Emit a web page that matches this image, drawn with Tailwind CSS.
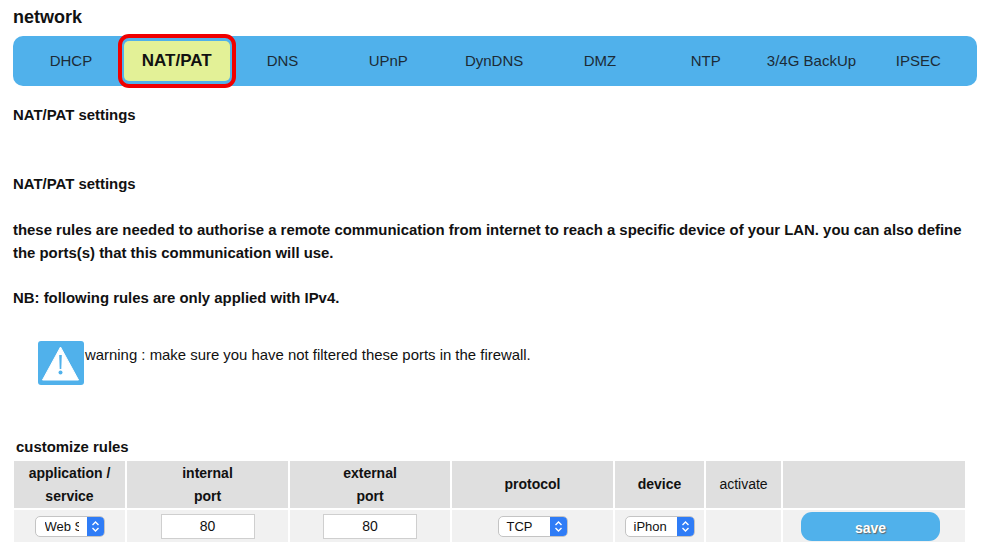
<!DOCTYPE html>
<html lang="en">
<head>
  <meta charset="UTF-8" />
  <title>network</title>
  <script src="https://cdn.jsdelivr.net/npm/@tailwindcss/browser@4"></script>
</head>
<body class="bg-white text-[#111] font-['Liberation_Sans',Arial,sans-serif] text-[14.92px] overflow-hidden">
  <div class="w-[990px] h-[557px] pl-[13px] pt-[7px] overflow-hidden">
    <h1 class="font-bold text-[18px] leading-[20px]">network</h1>

    <nav class="mt-[9px] w-[964px] h-[50px] bg-[#50b1eb] rounded-[10px] pl-[5px] flex items-center text-[15px] text-[#1c2b36]">
      <a class="w-[105.8px] text-center">DHCP</a>
      <div class="relative w-[105.8px] h-[40px] bg-[#e3f197] rounded-[5px] flex items-center justify-center font-bold text-[17px] text-[#111]">
        NAT/PAT
        <span class="absolute -inset-x-[6px] -inset-y-[7px] border-4 border-[#f00000] rounded-[11px]"></span>
      </div>
      <a class="w-[105.8px] text-center">DNS</a>
      <a class="w-[105.8px] text-center">UPnP</a>
      <a class="w-[105.8px] text-center">DynDNS</a>
      <a class="w-[105.8px] text-center">DMZ</a>
      <a class="w-[105.8px] text-center">NTP</a>
      <a class="w-[105.8px] text-center">3/4G BackUp</a>
      <a class="w-[105.8px] text-center pl-[2px]">IPSEC</a>
    </nav>

    <p class="mt-[20px] font-bold leading-[18px]">NAT/PAT settings</p>
    <p class="mt-[51px] font-bold leading-[18px]">NAT/PAT settings</p>
    <p class="mt-[25px] font-bold leading-[23px] w-[960px]">these rules are needed to authorise a remote communication from internet to reach a specific device of your LAN. you can also define the ports(s) that this communication will use.</p>
    <p class="mt-[25px] font-bold leading-[18px]">NB: following rules are only applied with IPv4.</p>

    <div class="mt-[34px] ml-[25px] flex items-start">
      <svg class="w-[46px] h-[44px] shrink-0" viewBox="0 0 46 44">
        <rect width="46" height="44" rx="3" fill="#50b1eb" />
        <path d="M22.5 6 L40.5 39 L4.5 39 Z" fill="#fff" stroke="#fff" stroke-linejoin="round" />
        <path d="M21.2 14 h2.6 l-.5 14 h-1.6 Z" fill="#50b1eb" />
        <circle cx="22.5" cy="31.5" r="2" fill="#50b1eb" />
      </svg>
      <p class="ml-[1px] leading-[18px] mt-[5px]">warning : make sure you have not filtered these ports in the firewall.</p>
    </div>

    <p class="mt-[54px] ml-[3px] font-bold leading-[16px]">customize rules</p>

    <table class="mt-[6px] ml-[1px] w-[951px] table-fixed border-collapse text-[14px]">
      <colgroup>
        <col class="w-[112px]" />
        <col class="w-[163px]" />
        <col class="w-[162px]" />
        <col class="w-[163px]" />
        <col class="w-[91px]" />
        <col class="w-[77px]" />
        <col />
      </colgroup>
      <thead>
        <tr class="h-[48px] bg-[#dfdfdf] font-bold leading-[23px]">
          <th class="border-r-2 border-white font-bold">application /<br />service</th>
          <th class="border-r-2 border-white font-bold">internal<br />port</th>
          <th class="border-r-2 border-white font-bold">external<br />port</th>
          <th class="border-r-2 border-white font-bold">protocol</th>
          <th class="border-r-2 border-white font-bold">device</th>
          <th class="border-r-2 border-white font-normal">activate</th>
          <th></th>
        </tr>
      </thead>
      <tbody>
        <tr class="h-[33px] bg-[#f1f1f1] border-t-2 border-white text-[13px]">
          <td class="border-r-2 border-white">
            <div class="mx-auto w-[70px] h-[21px] flex rounded-[5px] bg-white border border-[#c4c4c4] overflow-hidden">
              <span class="ml-[9px] mr-[8px] flex-1 leading-[19px] overflow-hidden whitespace-nowrap">Web S</span>
              <svg class="w-[17px] h-full shrink-0 bg-[#2f7cf6]" viewBox="0 0 17 19"><path d="M5.5 8 L8.5 5 L11.5 8 M5.5 11 L8.5 14 L11.5 11" fill="none" stroke="#fff" stroke-width="1.4" /></svg>
            </div>
          </td>
          <td class="border-r-2 border-white">
            <input value="80" class="block mx-auto w-[94px] h-[25px] bg-white border border-[#cfcfcf] text-center text-[14px]" />
          </td>
          <td class="border-r-2 border-white">
            <input value="80" class="block mx-auto w-[94px] h-[25px] bg-white border border-[#cfcfcf] text-center text-[14px]" />
          </td>
          <td class="border-r-2 border-white">
            <div class="mx-auto w-[70px] h-[21px] flex rounded-[5px] bg-white border border-[#c4c4c4] overflow-hidden">
              <span class="flex-1 pl-[8px] leading-[19px]">TCP</span>
              <svg class="w-[17px] h-full shrink-0 bg-[#2f7cf6]" viewBox="0 0 17 19"><path d="M5.5 8 L8.5 5 L11.5 8 M5.5 11 L8.5 14 L11.5 11" fill="none" stroke="#fff" stroke-width="1.4" /></svg>
            </div>
          </td>
          <td class="border-r-2 border-white">
            <div class="mx-auto w-[70px] h-[21px] flex rounded-[5px] bg-white border border-[#c4c4c4] overflow-hidden">
              <span class="flex-1 pl-[8px] leading-[19px] overflow-hidden whitespace-nowrap">iPhon</span>
              <svg class="w-[17px] h-full shrink-0 bg-[#2f7cf6]" viewBox="0 0 17 19"><path d="M5.5 8 L8.5 5 L11.5 8 M5.5 11 L8.5 14 L11.5 11" fill="none" stroke="#fff" stroke-width="1.4" /></svg>
            </div>
          </td>
          <td class="border-r-2 border-white"></td>
          <td>
            <button class="block ml-[18px] mt-[1px] w-[139px] h-[29px] pt-[3px] rounded-[11px] bg-[#50b1eb] text-white font-bold text-[14px] [text-shadow:1px_1px_1px_#666]">save</button>
          </td>
        </tr>
      </tbody>
    </table>
  </div>
</body>
</html>
